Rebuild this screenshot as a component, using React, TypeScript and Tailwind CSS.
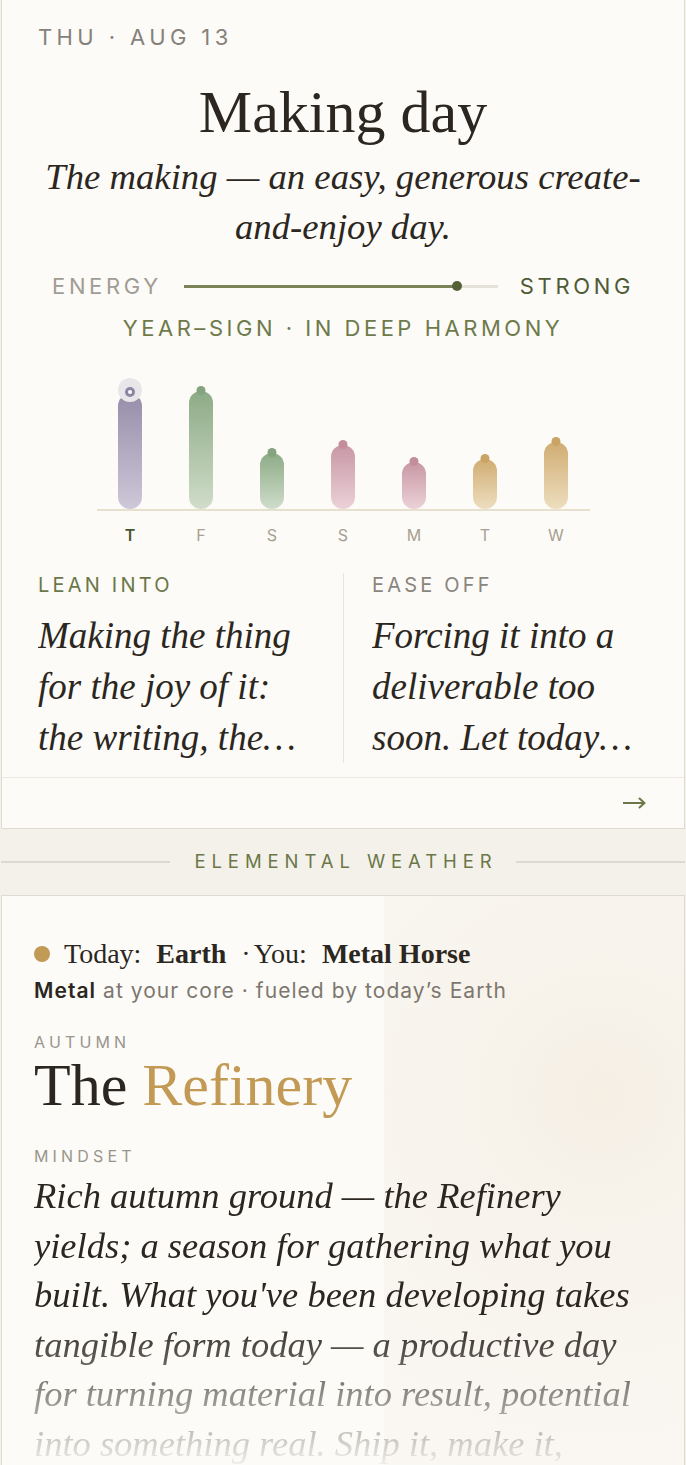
import React from 'react';

type Day = {
  label: string;
  height: number;
  bar: string;
  nub: string;
  today?: boolean;
};

const days: Day[] = [
  { label: 'T', height: 115, bar: 'from-[#978ea9] to-[#cec8d9]', nub: 'bg-[#8e85a4]', today: true },
  { label: 'F', height: 118, bar: 'from-[#8dab86] to-[#d0ddca]', nub: 'bg-[#85a37e]' },
  { label: 'S', height: 56, bar: 'from-[#8dab86] to-[#d0ddca]', nub: 'bg-[#85a37e]' },
  { label: 'S', height: 64, bar: 'from-[#c897a5] to-[#ebd2d8]', nub: 'bg-[#c48d9d]' },
  { label: 'M', height: 47, bar: 'from-[#c897a5] to-[#ebd2d8]', nub: 'bg-[#c48d9d]' },
  { label: 'T', height: 50, bar: 'from-[#d0ad72] to-[#eddebf]', nub: 'bg-[#c9a465]' },
  { label: 'W', height: 67, bar: 'from-[#d0ad72] to-[#eddebf]', nub: 'bg-[#c9a465]' },
];

const WeekChart = () => (
  <div className="mx-auto mt-[27px] w-[497px]">
    <div className="grid h-[140px] grid-cols-7">
      {days.map((day, i) => (
        <div key={i} className="flex flex-col items-center justify-end">
          <div
            className={`relative w-[24px] rounded-full bg-linear-to-b ${day.bar}`}
            style={{ height: day.height }}
          >
            {day.today && (
              <span className="absolute left-1/2 top-[-16px] h-[24px] w-[24px] -translate-x-1/2 rounded-full bg-[#e9e6e9]" />
            )}
            {day.today ? (
              <span className="absolute left-1/2 top-[-7px] flex h-[10px] w-[10px] -translate-x-1/2 items-center justify-center rounded-full bg-[#8e85a4]">
                <span className="h-[4px] w-[4px] rounded-full bg-white" />
              </span>
            ) : (
              <span className={`absolute left-1/2 top-[-5px] h-[9px] w-[9px] -translate-x-1/2 rounded-full ${day.nub}`} />
            )}
          </div>
        </div>
      ))}
    </div>
    <div className="mx-auto h-[2px] w-[493px] bg-[#e8e0ce]" />
    <div className="mt-[12px] grid grid-cols-7">
      {days.map((day, i) => (
        <span
          key={i}
          className={`text-center text-[16px] leading-[24px] ${day.today ? 'font-semibold text-[#4a5535]' : 'text-[#a7a092]'}`}
        >
          {day.label}
        </span>
      ))}
    </div>
  </div>
);

export default function App() {
  return (
    <div className="min-h-screen overflow-hidden bg-[#f3f1ea] font-['Inter',sans-serif] text-[#2b2620]">
      <section className="mx-px border border-t-0 border-[#dedbd2] bg-[#fcfbf7]">
        <div className="px-[36px] pt-[23px]">
          <p className="text-[22px] leading-[28px] tracking-[0.2em] text-[#86817a]">THU · AUG 13</p>
          <h1 className="mt-[28px] text-center font-['Liberation_Serif',serif] text-[60px] leading-[66px]">
            Making day
          </h1>
          <p className="mt-[7px] text-center font-['Liberation_Serif',serif] text-[36.7px] italic leading-[50px]">
            The making — an easy, generous create-and-enjoy day.
          </p>

          <div className="mt-[20px] flex h-[28px] items-center justify-center gap-[22px]">
            <span className="text-[22px] tracking-[0.165em] text-[#a19c94]">ENERGY</span>
            <div className="relative h-[3px] w-[314px] bg-[#e5e2d9]">
              <div className="h-full w-[273px] bg-[#7a8458]" />
              <span className="absolute left-[268px] top-1/2 h-[10px] w-[10px] -translate-y-1/2 rounded-full bg-[#556038]" />
            </div>
            <span className="text-[22px] tracking-[0.165em] text-[#4f5a36]">STRONG</span>
          </div>

          <p className="mt-[14px] text-center text-[22px] leading-[28px] tracking-[0.16em] text-[#6e7a4a]">
            YEAR–SIGN · IN DEEP HARMONY
          </p>

          <WeekChart />

          <div className="mt-[26px] grid grid-cols-2 pb-[14px]">
            <div className="pr-[30px]">
              <p className="text-[20px] leading-[24px] tracking-[0.16em] text-[#6b7748]">LEAN INTO</p>
              <p className="mt-[13px] line-clamp-3 font-['Liberation_Serif',serif] text-[37px] italic leading-[51px]">
                Making the thing for the joy of it: the writing, the music, the meal — without needing it to become anything yet.
              </p>
            </div>
            <div className="border-l border-[#e8e5dd] pl-[28px]">
              <p className="text-[20px] leading-[24px] tracking-[0.16em] text-[#8a857d]">EASE OFF</p>
              <p className="mt-[13px] line-clamp-3 font-['Liberation_Serif',serif] text-[37px] italic leading-[51px]">
                Forcing it into a deliverable too soon. Let today stay playful, loose and unfinished.
              </p>
            </div>
          </div>
        </div>
        <div className="flex h-[51px] items-center justify-end border-t border-[#ebe8e0] pr-[38px]">
          <svg width="23" height="12" viewBox="0 0 23 12" fill="none" stroke="#6b7748" strokeWidth="2">
            <path d="M0 6H21.5" />
            <path d="M16.5 1.5L21.5 6L16.5 10.5" strokeLinecap="round" strokeLinejoin="round" />
          </svg>
        </div>
      </section>

      <div className="mx-px flex h-[66px] items-center gap-[24px]">
        <div className="h-[2px] flex-1 bg-[#dcd9cf]" />
        <span className="mr-[-6px] text-[18.5px] tracking-[0.32em] text-[#6b7748]">ELEMENTAL WEATHER</span>
        <div className="h-[2px] flex-1 bg-[#dcd9cf]" />
      </div>

      <section className="relative mx-px overflow-hidden border border-b-0 border-[#dedbd2] bg-[#fcfbf7]">
        <div className="absolute inset-y-0 right-0 w-[300px] bg-[radial-gradient(circle_at_72%_32%,#f5efe4_0%,#f7f3eb_25%,#f9f6f0_60%,#faf8f3_100%)]" />
        <div className="relative px-[32px] pt-[42px]">
          <div className="flex items-center gap-[14px]">
            <span className="h-[16px] w-[16px] shrink-0 rounded-full bg-[#c19a55]" />
            <p className="font-['Liberation_Serif',serif] text-[28px] leading-[32px]">
              <span>Today:</span>
              <b className="ml-[15px]">Earth</b>
              <span className="ml-[15px]">·</span>
              <span className="ml-[3px]">You:</span>
              <b className="ml-[15px]">Metal Horse</b>
            </p>
          </div>
          <p className="mt-[7px] text-[21px] leading-[28px] tracking-[0.05em] text-[#7d776f]">
            <span className="font-semibold text-[#2b2620]">Metal</span> at your core · fueled by today’s Earth
          </p>

          <p className="mt-[27px] text-[16px] leading-[20px] tracking-[0.26em] text-[#9a958d]">AUTUMN</p>
          <h2 className="font-['Liberation_Serif',serif] text-[60px] leading-[66px]">
            The <span className="text-[#c29a55]">Refinery</span>
          </h2>

          <p className="mt-[28px] text-[16px] leading-[20px] tracking-[0.26em] text-[#9a958d]">MINDSET</p>
          <p className="mt-[5px] font-['Liberation_Serif',serif] text-[36.5px] italic leading-[49.5px] [mask-image:linear-gradient(to_bottom,black_150px,rgba(0,0,0,0.05)_295px,transparent_320px)]">
            Rich autumn ground — the Refinery yields; a season for gathering what you built. What you've been developing
            takes tangible form today — a productive day for turning material into result, potential into something
            real. Ship it, make it, finish it.
          </p>
        </div>
      </section>
    </div>
  );
}
